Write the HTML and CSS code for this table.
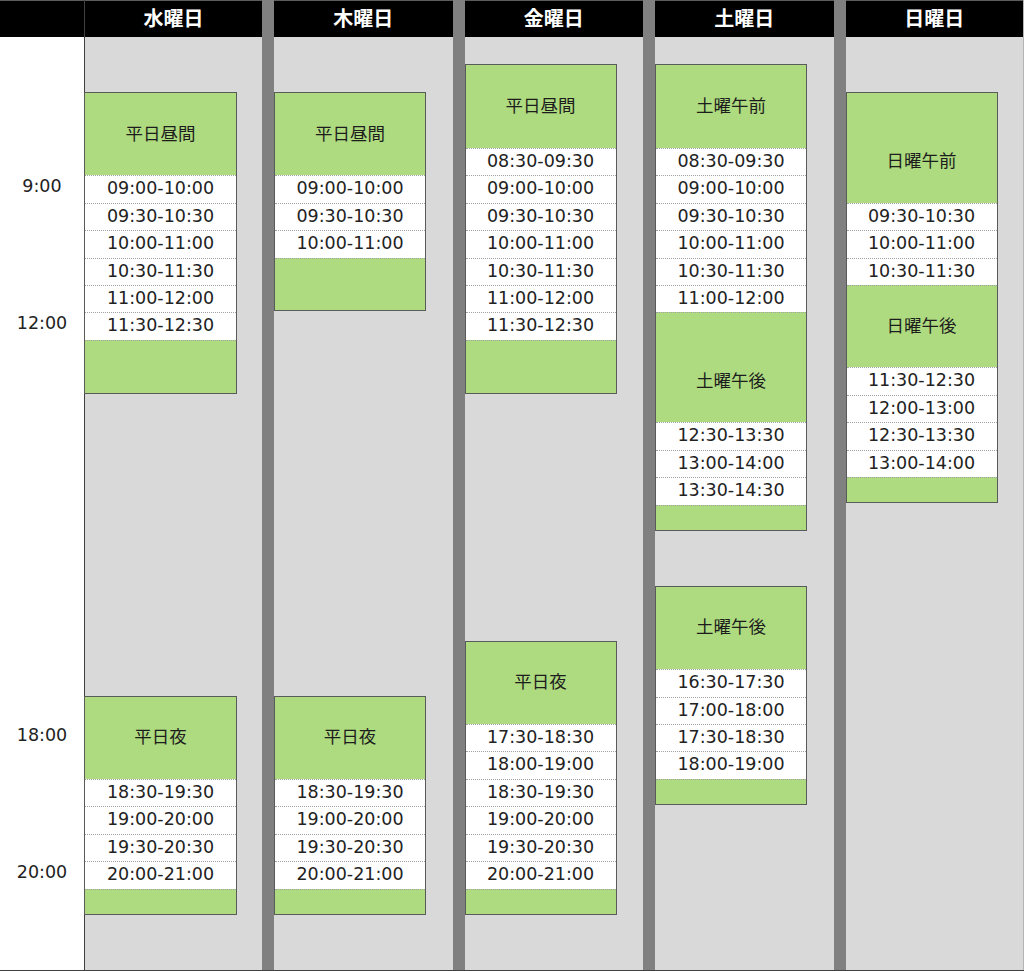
FILE: index.html
```html
<!DOCTYPE html>
<html lang="ja">
<head>
    <meta charset="UTF-8">
    <meta name="viewport" content="width=device-width, initial-scale=1.0">
    <title>レッスン時間割</title>
    <link rel="stylesheet" href="styles.css">
</head>
<body>
    <div class="timetable">
        <!-- 時刻 -->
        <div class="times">
            <div class="head"></div>
            <div class="grid">
                <div class="time at-5">9:00</div>
                <div class="time at-10">12:00</div>
                <div class="time at-25">18:00</div>
                <div class="time at-30">20:00</div>
            </div>
        </div>

        <!-- 水曜日 -->
        <div class="day first">
            <div class="head">水曜日</div>
            <div class="grid">
                <div class="block at-2 span-11">
                    <div class="label">平日昼間</div>
                    <div class="slot">09:00-10:00</div>
                    <div class="slot">09:30-10:30</div>
                    <div class="slot">10:00-11:00</div>
                    <div class="slot">10:30-11:30</div>
                    <div class="slot">11:00-12:00</div>
                    <div class="slot">11:30-12:30</div>
                    <div class="fill"></div>
                </div>
                <div class="block at-24 span-8">
                    <div class="label">平日夜</div>
                    <div class="slot">18:30-19:30</div>
                    <div class="slot">19:00-20:00</div>
                    <div class="slot">19:30-20:30</div>
                    <div class="slot">20:00-21:00</div>
                    <div class="fill"></div>
                </div>
            </div>
        </div>

        <!-- 木曜日 -->
        <div class="day">
            <div class="head">木曜日</div>
            <div class="grid">
                <div class="block at-2 span-8">
                    <div class="label">平日昼間</div>
                    <div class="slot">09:00-10:00</div>
                    <div class="slot">09:30-10:30</div>
                    <div class="slot">10:00-11:00</div>
                    <div class="fill"></div>
                </div>
                <div class="block at-24 span-8">
                    <div class="label">平日夜</div>
                    <div class="slot">18:30-19:30</div>
                    <div class="slot">19:00-20:00</div>
                    <div class="slot">19:30-20:30</div>
                    <div class="slot">20:00-21:00</div>
                    <div class="fill"></div>
                </div>
            </div>
        </div>

        <!-- 金曜日 -->
        <div class="day">
            <div class="head">金曜日</div>
            <div class="grid">
                <div class="block at-1 span-12">
                    <div class="label">平日昼間</div>
                    <div class="slot">08:30-09:30</div>
                    <div class="slot">09:00-10:00</div>
                    <div class="slot">09:30-10:30</div>
                    <div class="slot">10:00-11:00</div>
                    <div class="slot">10:30-11:30</div>
                    <div class="slot">11:00-12:00</div>
                    <div class="slot">11:30-12:30</div>
                    <div class="fill"></div>
                </div>
                <div class="block at-22 span-10">
                    <div class="label">平日夜</div>
                    <div class="slot">17:30-18:30</div>
                    <div class="slot">18:00-19:00</div>
                    <div class="slot">18:30-19:30</div>
                    <div class="slot">19:00-20:00</div>
                    <div class="slot">19:30-20:30</div>
                    <div class="slot">20:00-21:00</div>
                    <div class="fill"></div>
                </div>
            </div>
        </div>

        <!-- 土曜日 -->
        <div class="day">
            <div class="head">土曜日</div>
            <div class="grid">
                <div class="block at-1 span-17">
                    <div class="label">土曜午前</div>
                    <div class="slot">08:30-09:30</div>
                    <div class="slot">09:00-10:00</div>
                    <div class="slot">09:30-10:30</div>
                    <div class="slot">10:00-11:00</div>
                    <div class="slot">10:30-11:30</div>
                    <div class="slot">11:00-12:00</div>
                    <div class="label tall">土曜午後</div>
                    <div class="slot">12:30-13:30</div>
                    <div class="slot">13:00-14:00</div>
                    <div class="slot">13:30-14:30</div>
                    <div class="fill"></div>
                </div>
                <div class="block at-20 span-8">
                    <div class="label">土曜午後</div>
                    <div class="slot">16:30-17:30</div>
                    <div class="slot">17:00-18:00</div>
                    <div class="slot">17:30-18:30</div>
                    <div class="slot">18:00-19:00</div>
                    <div class="fill"></div>
                </div>
            </div>
        </div>

        <!-- 日曜日 -->
        <div class="day last">
            <div class="head">日曜日</div>
            <div class="grid">
                <div class="block at-2 span-15">
                    <div class="label tall">日曜午前</div>
                    <div class="slot">09:30-10:30</div>
                    <div class="slot">10:00-11:00</div>
                    <div class="slot">10:30-11:30</div>
                    <div class="label">日曜午後</div>
                    <div class="slot">11:30-12:30</div>
                    <div class="slot">12:00-13:00</div>
                    <div class="slot">12:30-13:30</div>
                    <div class="slot">13:00-14:00</div>
                    <div class="fill"></div>
                </div>
            </div>
        </div>
    </div>
</body>
</html>
```

FILE: styles.css
```css
:root {
    --row: 27.45px;
    --green: #aedb7f;
}

* {
    margin: 0;
    padding: 0;
    box-sizing: border-box;
}

body {
    font-family: "DejaVu Sans", "Noto Sans CJK JP", sans-serif;
    font-size: 17.5px;
    color: #222;
    background: #fff;
}

.timetable {
    display: grid;
    grid-template-columns: 84px 178px repeat(4, 1fr);
    width: 1024px;
    border-bottom: 1px solid #404040;
}

.head {
    height: 37px;
    padding-bottom: 4px;
    background: #000;
    border-top: 1px solid #5c5c5c;
    color: #fff;
    font-family: "Noto Sans CJK JP", sans-serif;
    font-weight: bold;
    font-size: 20px;
    display: flex;
    align-items: center;
    justify-content: center;
}

.grid {
    display: grid;
    grid-template-rows: repeat(34, var(--row));
}

.day {
    border-left: 12px solid #808080;
}

.day.first {
    border-left: 1px solid #404040;
}

.day.last {
    border-right: 1px solid #b5b5b5;
}

.day .grid {
    background: #d9d9d9;
}

.time {
    text-align: center;
    line-height: calc(var(--row) - 2px);
}

.block {
    width: 152px;
    justify-self: start;
    border: 1px solid #5a5a5a;
    display: flex;
    flex-direction: column;
    overflow: hidden;
}

.first .block {
    margin-left: -1px;
    width: 153px;
}

.label {
    height: calc(var(--row) * 3);
    flex-shrink: 0;
    padding-bottom: 4px;
    background: var(--green);
    display: flex;
    align-items: center;
    justify-content: center;
    font-family: "Noto Sans CJK JP", sans-serif;
    color: #1d1d1d;
}

.label.tall {
    height: calc(var(--row) * 4);
    padding-top: var(--row);
}

.slot {
    height: var(--row);
    flex-shrink: 0;
    background: #fff;
    text-align: center;
    line-height: calc(var(--row) - 3px);
}

.slot,
.fill,
.slot + .label {
    border-top: 1px dotted #a3a3a3;
}

.fill {
    flex: 1;
    background: var(--green);
}

/* 配置 */
.at-1 { grid-row-start: 2; }
.at-2 { grid-row-start: 3; }
.at-5 { grid-row-start: 6; }
.at-10 { grid-row-start: 11; }
.at-20 { grid-row-start: 21; }
.at-22 { grid-row-start: 23; }
.at-24 { grid-row-start: 25; }
.at-25 { grid-row-start: 26; }
.at-30 { grid-row-start: 31; }

.span-8 { grid-row-end: span 8; }
.span-10 { grid-row-end: span 10; }
.span-11 { grid-row-end: span 11; }
.span-12 { grid-row-end: span 12; }
.span-15 { grid-row-end: span 15; }
.span-17 { grid-row-end: span 17; }
```
